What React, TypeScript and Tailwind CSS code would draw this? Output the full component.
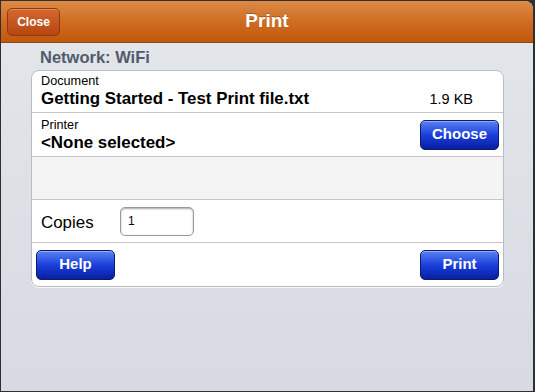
const blueBtn =
  "flex items-center justify-center rounded-[5px] border border-[#0a1a6e] bg-gradient-to-b from-[#5d7ff0] via-[#1a3fdc] to-[#0a1ea0] text-[15px] font-bold text-white shadow-[inset_0_1px_0_rgba(255,255,255,0.35)]";

export default function App() {
  return (
    <div
      className="h-[392px] w-[535px] overflow-hidden bg-[#2f2f2f] p-[1px] pr-[2px]"
      style={{ fontFamily: '"Liberation Sans", Arial, sans-serif' }}
    >
      <div className="flex h-full flex-col overflow-hidden rounded-tr-[8px] bg-gradient-to-b from-[#e3e6eb] to-[#d7dae0]">
        <div className="relative flex h-[42px] shrink-0 items-center justify-center border-b border-[#8a4a18] bg-gradient-to-b from-[#dc8b45] via-[#cf6d22] to-[#c2570a]">
          <button className="absolute left-[6px] top-[7px] flex h-[28px] w-[53px] items-center justify-center rounded-[5px] border border-[#8e3a10] bg-gradient-to-b from-[#d4672e] to-[#b8450f] text-[12px] font-bold text-white shadow-[inset_0_1px_0_rgba(255,255,255,0.25)]">
            Close
          </button>
          <span className="text-[19px] font-bold text-white [text-shadow:0_-1px_0_rgba(0,0,0,0.25)]">
            Print
          </span>
        </div>

        <div className="px-[30px] pt-[4px]">
          <div className="pl-[9px] text-[16.5px] font-bold leading-[20px] text-[#525b6b]">
            Network: WiFi
          </div>
          <div className="mt-[3px] w-[473px] overflow-hidden rounded-[8px] border border-[#b9bcc2] bg-white shadow-[0_1px_0_rgba(255,255,255,0.8)]">
            <div className="flex h-[42px] items-end justify-between border-b border-[#c4c6ca] pb-[3px] pl-[9px] pr-[30px]">
              <div>
                <div className="text-[12.7px] leading-[15px] text-black">Document</div>
                <div className="text-[16.9px] font-bold leading-[20px] text-black">
                  Getting Started - Test Print file.txt
                </div>
              </div>
              <div className="text-[14.5px] leading-[20px] text-black">1.9 KB</div>
            </div>
            <div className="flex h-[44px] items-center justify-between border-b border-[#c4c6ca] pl-[9px] pr-[4px]">
              <div className="pt-[1px]">
                <div className="text-[12.7px] leading-[15px] text-black">Printer</div>
                <div className="text-[16.9px] font-bold leading-[20px] text-black">
                  &lt;None selected&gt;
                </div>
              </div>
              <button className={`${blueBtn} h-[30px] w-[79px]`}>Choose</button>
            </div>
            <div className="h-[43px] border-b border-[#c4c6ca] bg-[#f4f4f4]" />
            <div className="flex h-[43px] items-center border-b border-[#c4c6ca] pl-[9px]">
              <span className="w-[79px] pt-[4px] text-[16.9px] text-black">Copies</span>
              <div className="flex h-[29px] w-[74px] items-center rounded-[5px] border border-[#9a9a9a] bg-white pl-[7px] text-[12px] text-black shadow-[inset_0_1px_2px_rgba(0,0,0,0.35)]">
                1
              </div>
            </div>
            <div className="flex h-[43px] items-center justify-between pl-[4px] pr-[4px]">
              <button className={`${blueBtn} h-[30px] w-[79px]`}>Help</button>
              <button className={`${blueBtn} h-[30px] w-[79px]`}>Print</button>
            </div>
          </div>
        </div>
      </div>
    </div>
  );
}
